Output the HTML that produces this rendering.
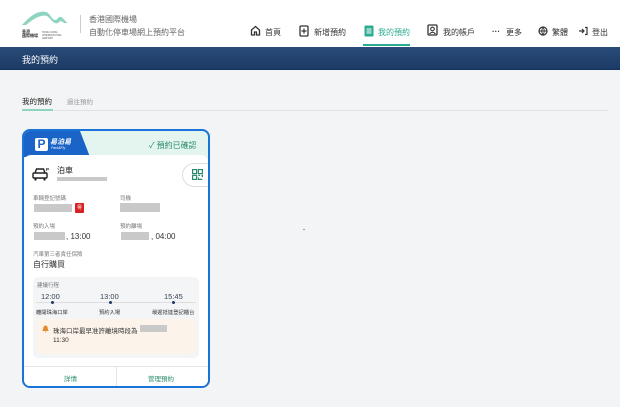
<!DOCTYPE html>
<html><head><meta charset="utf-8"><style>
*{box-sizing:border-box;margin:0;padding:0}
body{width:620px;height:407px;overflow:hidden;background:#f3f4f5;font-family:"Liberation Sans","Noto Sans CJK TC",sans-serif;color:#222;position:relative}
.a{position:absolute}
.hdr{left:0;top:0;width:620px;height:47px;background:#fff}
.nav{font-size:8px;color:#333;top:27px}
.bar{left:0;top:47px;width:620px;height:23px;background:linear-gradient(#2a4c78,#1c3a66);border-bottom:1px solid #15305a}
.gray{background:#c9c9c9}
.lbl{font-size:5.5px;color:#777}
.val{font-size:8px;color:#333}
</style></head><body>
<div class="a hdr"></div>
<svg class="a" style="left:20px;top:8px" width="50" height="20" viewBox="0 0 50 20"><path d="M2 17 C10 8 18 2 26 4 C30 5 32 12 35 12 C38 12 38 8 41 9 C44 10 45 14 48 15 L44 15 C41 12 40 13 38 15 C34 17 30 10 27 8 C20 6 12 12 6 17Z" fill="#8fd3c1"/></svg>
<div class="a" style="left:22px;top:30px;font-size:4px;color:#333;line-height:4px;font-weight:bold">香港<br>國際機場</div>
<div class="a" style="left:42px;top:31px;font-size:2.5px;color:#555;line-height:3px">HONG KONG<br>INTERNATIONAL<br>AIRPORT</div>
<div class="a" style="left:80px;top:15px;width:1px;height:18px;background:#ccc"></div>
<div class="a" style="left:89px;top:13px;font-size:8px;color:#666;line-height:13px">香港國際機場<br>自動化停車場網上預約平台</div>
<svg class="a" style="left:250px;top:25px" width="11" height="11" viewBox="0 0 11 11"><path d="M1.5 5 L5.5 1.5 L9.5 5 V10 H6.5 V7 H4.5 V10 H1.5Z" fill="none" stroke="#333" stroke-width="1.3"/></svg><div class="a nav" style="left:265px">首頁</div>
<svg class="a" style="left:299px;top:25px" width="10" height="12" viewBox="0 0 10 12"><rect x="1" y="1" width="8" height="10" rx="1" fill="none" stroke="#333" stroke-width="1.3"/><path d="M5 3.5V8.5M2.5 6H7.5" stroke="#333" stroke-width="1.2"/></svg><div class="a nav" style="left:314px">新增預約</div>
<svg class="a" style="left:364px;top:25px" width="10" height="12" viewBox="0 0 10 12"><rect x="0.5" y="0.5" width="9" height="11" rx="1" fill="#2bab8f"/><path d="M2.5 4H7.5M2.5 6H7.5M2.5 8H7.5" stroke="#fff" stroke-width="1"/></svg><div class="a nav" style="left:378px;color:#2bab8f">我的預約</div>
<div class="a" style="left:363px;top:44px;width:47px;height:2px;background:#2bab8f"></div>
<svg class="a" style="left:427px;top:24px" width="11" height="12" viewBox="0 0 11 12"><rect x="1" y="1" width="9" height="10" rx="1" fill="none" stroke="#333" stroke-width="1.3"/><circle cx="5.5" cy="5" r="1.8" fill="none" stroke="#333" stroke-width="1.1"/><path d="M2.5 10 Q5.5 6.5 8.5 10" fill="none" stroke="#333" stroke-width="1.1"/></svg><div class="a nav" style="left:443px">我的帳戶</div>
<div class="a nav" style="left:492px;font-weight:bold">···</div><div class="a nav" style="left:506px">更多</div>
<svg class="a" style="left:538px;top:26px" width="10" height="10" viewBox="0 0 10 10"><circle cx="5" cy="5" r="4" fill="none" stroke="#333" stroke-width="1.2"/><path d="M1 5H9M5 1Q2.5 5 5 9Q7.5 5 5 1" fill="none" stroke="#333" stroke-width="0.9"/></svg><div class="a nav" style="left:552px">繁體</div>
<svg class="a" style="left:578px;top:26px" width="10" height="10" viewBox="0 0 10 10"><path d="M1 5H6M4 3L6 5L4 7M7 1.5H9V8.5H7" fill="none" stroke="#333" stroke-width="1.2"/></svg><div class="a nav" style="left:592px">登出</div>
<div class="a bar"></div>
<div class="a" style="left:22px;top:53px;font-size:9px;color:#fff">我的預約</div>
<div class="a" style="left:22px;top:96px;font-size:7.5px;color:#222">我的預約</div>
<div class="a" style="left:67px;top:96px;font-size:6.5px;color:#999">過往預約</div>
<div class="a" style="left:22px;top:110px;width:586px;height:1px;background:#e2e2e2"></div>
<div class="a" style="left:22px;top:109px;width:31px;height:2px;background:#8fd3c1"></div>
<div class="a" style="left:303px;top:229px;width:2px;height:1px;background:#999"></div>
<!-- card -->
<div class="a" style="left:22px;top:129px;width:188px;height:259px;border:2px solid #1a73d8;border-radius:8px;background:#e4f5ef;overflow:hidden">
 <div class="a" style="left:0;top:0;width:66px;height:26px;background:#1a64c8;clip-path:polygon(0 0,56px 0,66px 26px,0 26px)"></div>
 <div class="a" style="left:11px;top:7px;width:13px;height:13px;background:#fff;border-radius:2px;color:#1a64c8;font-weight:bold;font-size:12px;line-height:13px;text-align:center">P</div>
 <div class="a" style="left:26px;top:6px;font-size:7px;color:#fff;font-weight:bold;font-style:italic">易泊易</div>
 <div class="a" style="left:27px;top:15px;font-size:3.5px;color:#fff;font-style:italic">Park&amp;Fly</div>
 <div class="a" style="left:125px;top:9px;font-size:8px;color:#2b8a6e">✓ 預約已確認</div>
 <div class="a" style="left:0;top:24px;width:184px;height:231px;background:#fff;border-radius:7px 7px 0 0">
  <svg class="a" style="left:8px;top:12px" width="18" height="14" viewBox="0 0 18 14"><path d="M3 6 L4.5 2 H11.5 L13 6" fill="none" stroke="#222" stroke-width="1.4"/><rect x="1" y="6" width="14" height="5" rx="1" fill="none" stroke="#222" stroke-width="1.4"/><rect x="2.5" y="11" width="2" height="2.5" fill="#222"/><rect x="11.5" y="11" width="2" height="2.5" fill="#222"/><text x="14" y="4" font-size="4.5" font-family="Liberation Sans" font-weight="bold" fill="#222">P</text></svg>
  <div class="a" style="left:33px;top:10px;font-size:8px">泊車</div>
  <div class="a gray" style="left:33px;top:22px;width:50px;height:4px"></div>
  <div class="a" style="left:158px;top:8px;width:40px;height:24px;border:1px solid #ddd;border-radius:12px;background:#fff"></div>
  <svg class="a" style="left:168px;top:14px" width="11" height="11" viewBox="0 0 11 11" fill="none" stroke="#2b8a6e" stroke-width="1.2"><rect x="0.6" y="0.6" width="4" height="4"/><rect x="6.4" y="0.6" width="4" height="4"/><rect x="0.6" y="6.4" width="4" height="4"/><path d="M6.4 6.4H8M9.5 6.4H10.4V8M6.4 8.5V10.4H10.4"/></svg>
  <div class="a lbl" style="left:9px;top:39px">車輛登記號碼</div>
  <div class="a lbl" style="left:96px;top:39px">司機</div>
  <div class="a gray" style="left:10px;top:49px;width:38px;height:8px"></div>
  <div class="a" style="left:51px;top:48px;width:9px;height:10px;background:#d62222;border-radius:1px;color:#fff;font-size:5px;text-align:center;line-height:10px">粵</div>
  <div class="a gray" style="left:96px;top:48px;width:40px;height:9px"></div>
  <div class="a lbl" style="left:9px;top:67px">預約入場</div>
  <div class="a lbl" style="left:96px;top:67px">預約離場</div>
  <div class="a gray" style="left:10px;top:77px;width:31px;height:8px"></div>
  <div class="a val" style="left:42px;top:77px">, 13:00</div>
  <div class="a gray" style="left:97px;top:77px;width:28px;height:8px"></div>
  <div class="a val" style="left:127px;top:77px">, 04:00</div>
  <div class="a lbl" style="left:9px;top:95px">汽車第三者責任保險</div>
  <div class="a val" style="left:9px;top:104px">自行購買</div>
  <div class="a" style="left:9px;top:122px;width:166px;height:81px;background:#f4f5f7;border-radius:5px">
   <div class="a lbl" style="left:4px;top:4px">建議行程</div>
   <div class="a" style="left:3px;top:25px;width:160px;height:1px;background:#ddd"></div>
   <div class="a" style="left:8px;top:15px;font-size:7.5px;color:#345">12:00</div>
   <div class="a" style="left:67px;top:15px;font-size:7.5px;color:#345">13:00</div>
   <div class="a" style="left:131px;top:15px;font-size:7.5px;color:#345">15:45</div>
   <div class="a" style="left:18px;top:24px;width:3px;height:3px;border-radius:50%;background:#1c3a66"></div>
   <div class="a" style="left:76px;top:24px;width:3px;height:3px;border-radius:50%;background:#1c3a66"></div>
   <div class="a" style="left:139px;top:24px;width:3px;height:3px;border-radius:50%;background:#1c3a66"></div>
   <div class="a" style="left:3px;top:31px;font-size:5.3px;color:#333">離開珠海口岸</div>
   <div class="a" style="left:66px;top:31px;font-size:5.3px;color:#333">預約入場</div>
   <div class="a" style="left:119px;top:31px;font-size:5.3px;color:#333">最遲抵達登記櫃台</div>
   <div class="a" style="left:3px;top:42px;width:160px;height:35px;background:#fcf3ea;border-radius:5px"></div>
   <svg class="a" style="left:9px;top:48px" width="7" height="8" viewBox="0 0 7 8"><path d="M3.5 0.5 C1.5 0.5 1.2 2.5 1.2 4 L0.3 6 H6.7 L5.8 4 C5.8 2.5 5.5 0.5 3.5 0.5Z M2.5 6.8 H4.5 L3.5 7.8Z" fill="#e58a2a"/></svg>
   <div class="a" style="left:20px;top:48px;font-size:6.5px;color:#333">珠海口岸最早准許離境時段為</div>
   <div class="a gray" style="left:107px;top:48px;width:27px;height:7px"></div>
   <div class="a" style="left:20px;top:60px;font-size:6.5px;color:#333">11:30</div>
  </div>
  <div class="a" style="left:0;top:211px;width:184px;height:1px;background:#e5e5e5"></div>
  <div class="a" style="left:92px;top:211px;width:1px;height:20px;background:#e5e5e5"></div>
  <div class="a" style="left:40px;top:218px;font-size:6.5px;color:#2b8a6e">詳情</div>
  <div class="a" style="left:124px;top:218px;font-size:6.5px;color:#2b8a6e">管理預約</div>
 </div>
</div>
</body></html>
